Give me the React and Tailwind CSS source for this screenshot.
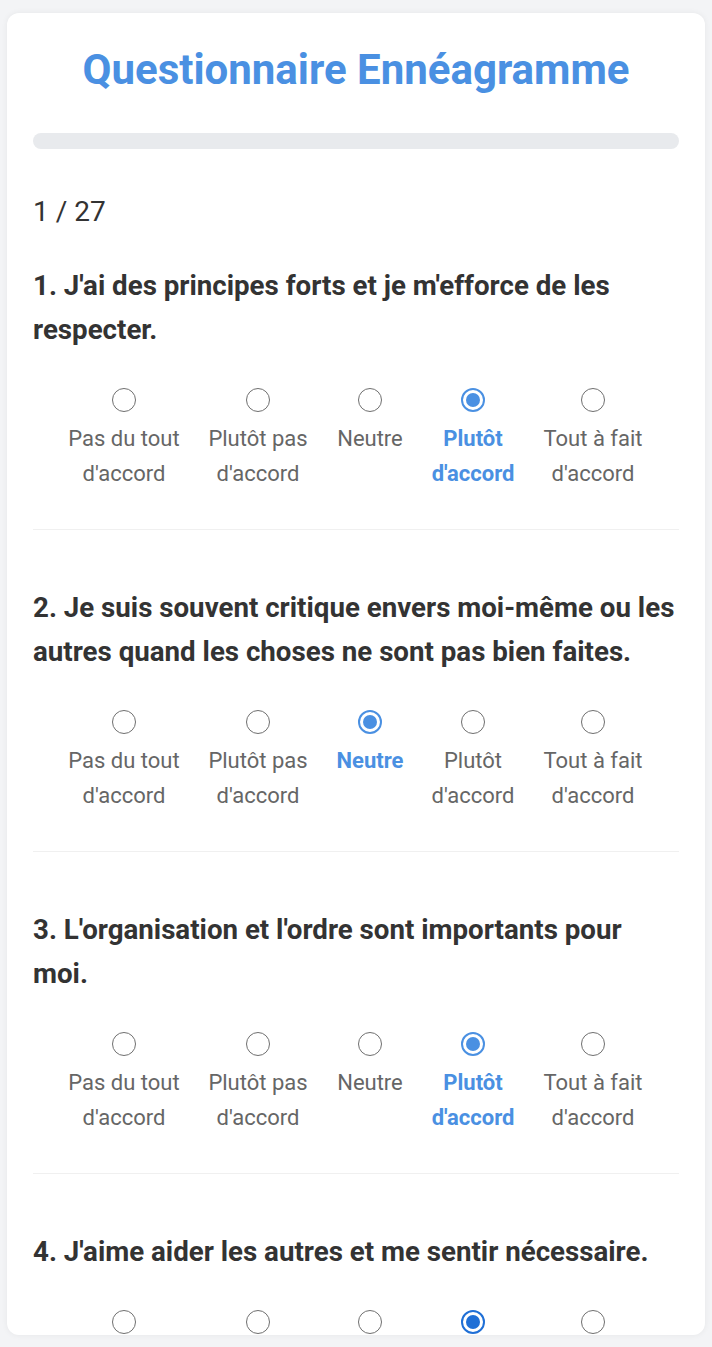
import { useState } from "react";

const OPTIONS = [
  { label: "Pas du tout d'accord", width: "w-[132px]" },
  { label: "Plutôt pas d'accord", width: "w-[136px]" },
  { label: "Neutre", width: "w-[88px]" },
  { label: "Plutôt d'accord", width: "w-[118px]" },
  { label: "Tout à fait d'accord", width: "w-[122px]" },
];

const QUESTIONS = [
  { id: 1, text: "J'ai des principes forts et je m'efforce de les respecter.", answer: 3 },
  { id: 2, text: "Je suis souvent critique envers moi-même ou les autres quand les choses ne sont pas bien faites.", answer: 2 },
  { id: 3, text: "L'organisation et l'ordre sont importants pour moi.", answer: 3 },
  { id: 4, text: "J'aime aider les autres et me sentir nécessaire.", answer: 3, focused: true },
];

function Radio({ checked, focused }) {
  if (!checked) {
    return <span className="block w-6 h-6 rounded-full border-[1.5px] border-[#6f6f6f] bg-white" />;
  }
  return (
    <span
      className={`flex items-center justify-center w-6 h-6 rounded-full border-2 bg-white ${
        focused ? "border-[#1f6fd6]" : "border-[#4a90e2]"
      }`}
    >
      <span className={`block w-[14px] h-[14px] rounded-full ${focused ? "bg-[#1f6fd6]" : "bg-[#4a90e2]"}`} />
    </span>
  );
}

function Question({ question, value, onChange }) {
  return (
    <div className="border-b border-[#f0f0f0] pb-[38px] mb-[56px]">
      <p className="text-[27.7px] leading-[44px] font-bold text-[#333]">
        {question.id}. {question.text}
      </p>
      <div className="flex justify-center mt-[36px]">
        {OPTIONS.map((opt, i) => (
          <label
            key={opt.label}
            onClick={() => onChange(i)}
            className={`${opt.width} flex flex-col items-center cursor-pointer`}
          >
            <Radio checked={value === i} focused={question.focused && value === i} />
            <span
              className={`mt-[9px] text-center text-[22px] leading-[35px] ${
                value === i ? "font-bold text-[#4a90e2]" : "text-[#666]"
              }`}
            >
              {opt.label}
            </span>
          </label>
        ))}
      </div>
    </div>
  );
}

export default function App() {
  const [answers, setAnswers] = useState(QUESTIONS.map((q) => q.answer));

  return (
    <div className="h-[1347px] overflow-hidden bg-[#f3f4f6] px-[7px] pt-[13px] font-['Roboto',sans-serif]">
      <div className="h-[1322px] overflow-hidden rounded-[12px] bg-white shadow-[0_0_6px_rgba(0,0,0,0.06)] px-[26px] pt-[34px]">
        <h1 className="text-center text-[42px] leading-[46px] font-bold text-[#4a90e2]">
          Questionnaire Ennéagramme
        </h1>

        <div className="mt-[40px] h-4 rounded-full bg-[#e8eaed]" />

        <p className="mt-[41px] text-[28px] leading-[44px] text-[#333]">1 / 27</p>

        <div className="mt-[30px]">
          {QUESTIONS.map((q, idx) => (
            <Question
              key={q.id}
              question={q}
              value={answers[idx]}
              onChange={(v) =>
                setAnswers((prev) => prev.map((a, j) => (j === idx ? v : a)))
              }
            />
          ))}
        </div>
      </div>
    </div>
  );
}
